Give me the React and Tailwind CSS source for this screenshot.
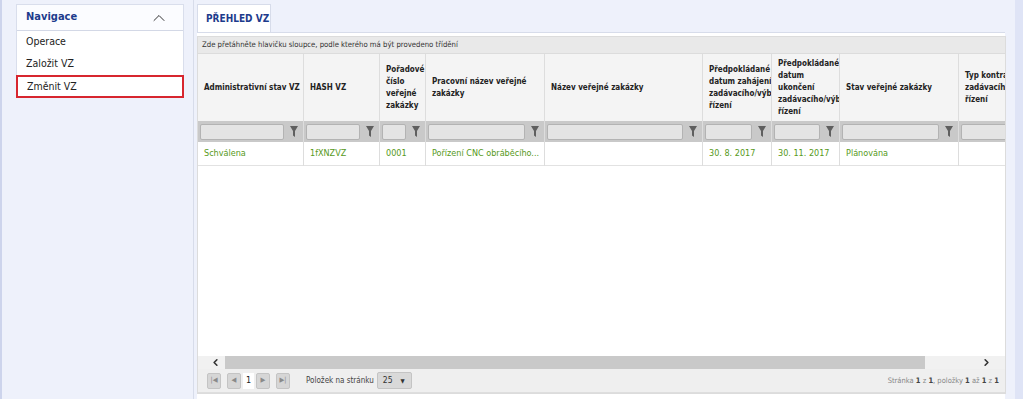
import { ChevronUp, ChevronLeft, ChevronRight } from "lucide-react";

const cols = [
  { w: 106, title: "Administrativní stav VZ", val: "Schválena", textW: 98 },
  { w: 76, title: "HASH VZ", val: "1fXNZVZ" },
  { w: 46, title: "Pořadové číslo veřejné zakázky", val: "0001", inputW: 24 },
  { w: 119, title: "Pracovní název veřejné zakázky", val: "Pořízení CNC obráběcího..." },
  { w: 158, title: "Název veřejné zakázky", val: "" },
  { w: 69, title: "Předpokládané datum zahájení zadávacího/výběrového řízení", val: "30. 8. 2017", textW: 66 },
  { w: 68, title: "Předpokládané datum ukončení zadávacího/výběrového řízení", val: "30. 11. 2017", textW: 46 },
  { w: 119, title: "Stav veřejné zakázky", val: "Plánována" },
  { w: 120, title: "Typ kontraktu zadávacího řízení", val: "", textW: 60 },
];

function Funnel() {
  return (
    <svg width="8" height="11" viewBox="0 0 8 11" className="shrink-0">
      <path d="M0 0h8L5 5v6L3 9.5V5z" fill="#5f5f5f" />
    </svg>
  );
}

function PagerBtn({ children }) {
  return (
    <div className="w-[14px] h-[16px] flex items-center justify-center bg-[#d6d6d6] border border-[#c4c4c4] rounded-[2px] text-[#8a8a8a] text-[7px] leading-none">
      {children}
    </div>
  );
}

export default function App() {
  return (
    <div className="w-[1023px] h-[399px] overflow-hidden flex bg-[#eef1fb] font-['Liberation_Sans_Narrow','DejaVu_Sans_Condensed','Roboto_Condensed',Roboto,sans-serif] text-[#222]">
      {/* sidebar */}
      <div className="w-[193px] shrink-0 border-l-[2px] border-[#cdd4ec] pl-[14px] pt-[4px] pr-[9px]">
        <div className="bg-white border border-[#d9deec]">
          <div className="h-[26px] flex items-center justify-between pl-[9px] pr-[14px] border-b border-[#d3d8e6] bg-[#fbfcff]">
            <span className="text-[11px] font-bold text-[#1d3b8c]">Navigace</span>
            <ChevronUp size={20} strokeWidth={1.2} className="text-[#333]" />
          </div>
          <div className="h-[22px] flex items-center pl-[9px] text-[10.5px]">Operace</div>
          <div className="h-[22px] flex items-center pl-[9px] text-[10.5px]">Založit VZ</div>
          <div className="h-[23px] flex items-center pl-[9px] text-[10.5px] border-2 border-[#d7262f] -mx-px -mb-px">Změnit VZ</div>
        </div>
      </div>

      {/* main */}
      <div className="flex-1 flex min-w-0">
        <div className="w-[812px] shrink-0 flex flex-col border-l border-[#d7dcea] pl-[3px] pt-[4px]">
          <div className="flex">
            <div className="h-[28px] w-[74px] pl-[8px] flex items-center whitespace-nowrap bg-white border border-b-0 border-[#d7dcea] text-[10px] font-bold text-[#1d3b8c]">
              PŘEHLED VZ
            </div>
          </div>
          <div className="flex-1 bg-white border-t border-[#d7dcea] pt-[3px] flex flex-col">
            <div className="flex flex-col border border-[#dcdcdc] w-[809px]">
              <div className="h-[17px] bg-[#e9e9e9] flex items-center pl-[4px] text-[7.7px] text-[#333] border-b border-[#dcdcdc]">
                Zde přetáhněte hlavičku sloupce, podle kterého má být provedeno třídění
              </div>
              <div className="overflow-hidden">
                <div className="flex w-max">
                  {cols.map((c, i) => (
                    <div key={i} style={{ width: c.w }} className="shrink-0 flex flex-col border-r border-[#dddddd]">
                      <div className="h-[67px] bg-[#f4f4f4] flex items-center pl-[6px] overflow-hidden">
                        <span
                          className="shrink-0 text-[8px] font-bold leading-[12px] text-[#222]"
                          style={{ width: c.textW || c.w - 12 }}
                        >
                          {c.title}
                        </span>
                      </div>
                      <div className="h-[21px] bg-[#c9c9c9] flex items-center pl-[2px] overflow-hidden">
                        <div
                          style={c.inputW ? { width: c.inputW } : undefined}
                          className={"h-[16px] bg-[#e4e4e4] border border-[#b3b3b3] rounded-[2px] " + (c.inputW ? "shrink-0" : "flex-1")}
                        />
                        <div className="w-[19px] shrink-0 flex justify-center">
                          <Funnel />
                        </div>
                      </div>
                      <div className="h-[24px] flex items-center pl-[6px] text-[9px] text-[#56991a] border-b border-[#e2e2e2] whitespace-nowrap overflow-hidden">
                        {c.val}
                      </div>
                    </div>
                  ))}
                </div>
              </div>
              <div className="h-[190px] bg-white" />
              <div className="h-[13px] flex items-center bg-[#f1f1f1]">
                <ChevronLeft size={11} strokeWidth={3.5} className="text-[#333] ml-[12px] shrink-0" />
                <div className="ml-[4px] w-[700px] h-[13px] bg-[#c9c9c9]" />
                <div className="flex-1" />
                <ChevronRight size={11} strokeWidth={3.5} className="text-[#333] mr-[13px] shrink-0" />
              </div>
              <div className="h-[24px] bg-[#efefef] flex items-center pl-[9px] pr-[6px] text-[8px] text-[#444] border-b border-[#dedede]">
                <PagerBtn>|◀</PagerBtn>
                <div className="ml-[6px] flex items-center gap-[2px]">
                  <PagerBtn>◀</PagerBtn>
                  <div className="w-[11px] h-[16px] bg-white flex items-center justify-center text-[9px] text-[#222]">1</div>
                  <PagerBtn>▶</PagerBtn>
                </div>
                <div className="ml-[6px]">
                  <PagerBtn>▶|</PagerBtn>
                </div>
                <span className="ml-[16px]">Položek na stránku</span>
                <div className="ml-[3px] w-[35px] h-[17px] bg-[#d9d9d9] border border-[#c4c4c4] rounded-[2px] flex items-center justify-between pl-[5px] pr-[6px] text-[8.5px] text-[#333]">
                  <span>25</span>
                  <span className="text-[6px]">▼</span>
                </div>
                <div className="flex-1" />
                <span className="text-[7.5px] text-[#888]">
                  Stránka <b className="text-[#444]">1</b> z <b className="text-[#444]">1</b>, položky <b className="text-[#444]">1</b> až <b className="text-[#444]">1</b> z <b className="text-[#444]">1</b>
                </span>
              </div>
            </div>
          </div>
        </div>
        <div className="flex-1" />
        <div className="w-[8px] bg-[#dfe4f6]" />
      </div>
    </div>
  );
}
